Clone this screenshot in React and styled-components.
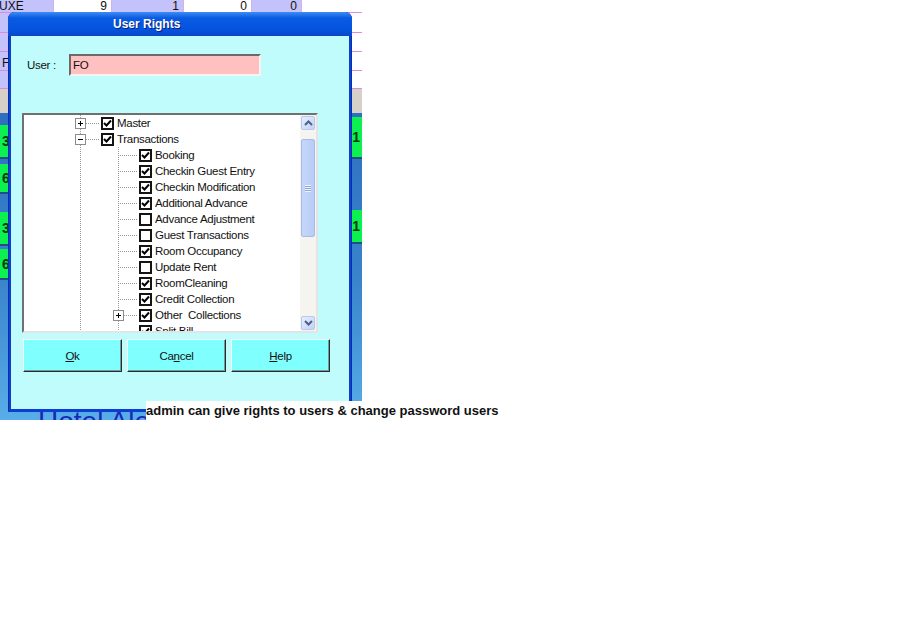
import React from 'react'
import styled, { createGlobalStyle } from 'styled-components'

const GlobalStyle = createGlobalStyle`
  html, body { margin: 0; padding: 0; background: #fff; }
  body { font-family: "Liberation Sans", Arial, sans-serif; }
`

const topCells = [
    { w: 55, tone: 'lav', text: 'UXE', align: 'left' },
    { w: 58, tone: 'white', text: '9' },
    { w: 72, tone: 'lav', text: '1' },
    { w: 68, tone: 'white', text: '0' },
    { w: 50, tone: 'lav', text: '0' },
]

const gridRows = [
    { h: 19, text: '' },
    { h: 18, text: '' },
    { h: 18, text: 'F' },
    { h: 17, text: '' },
]

const leftTiles = [
    { gap: 12, h: 32, text: '3' },
    { gap: 5, h: 28, text: '6' },
    { gap: 18, h: 32, text: '3' },
    { gap: 3, h: 29, text: '6' },
]

const rightTiles = [
    { gap: 4, h: 40, text: '1' },
    { gap: 51, h: 32, text: '1' },
]

const treeRows = [
    { level: 1, exp: '+', checked: true, label: 'Master' },
    { level: 1, exp: '-', checked: true, label: 'Transactions' },
    { level: 2, checked: true, label: 'Booking' },
    { level: 2, checked: true, label: 'Checkin Guest Entry' },
    { level: 2, checked: true, label: 'Checkin Modification' },
    { level: 2, checked: true, label: 'Additional Advance' },
    { level: 2, checked: false, label: 'Advance Adjustment' },
    { level: 2, checked: false, label: 'Guest Transactions' },
    { level: 2, checked: true, label: 'Room Occupancy' },
    { level: 2, checked: false, label: 'Update Rent' },
    { level: 2, checked: true, label: 'RoomCleaning' },
    { level: 2, checked: true, label: 'Credit Collection' },
    { level: 2, exp: '+', checked: true, label: 'Other  Collections' },
    { level: 2, checked: true, label: 'Split Bill' },
]

const Check = () => (
    <svg width="9" height="9" viewBox="0 0 9 9">
        <path d="M1 4 L3.5 6.5 L8 1.5" fill="none" stroke="#000" strokeWidth="2" />
    </svg>
)

const Chevron = ({ down }) => (
    <svg width="9" height="6" viewBox="0 0 9 6">
        <path d={down ? 'M1 1 L4.5 4.5 L8 1' : 'M1 5 L4.5 1.5 L8 5'} fill="none" stroke="#4d6185" strokeWidth="2" />
    </svg>
)

const App = () => {
    return (
        <Page>
            <GlobalStyle />
            <Scene>
                <BackApp>
                    <TopRow>
                        {topCells.map((c, i) => (
                            <TopCell key={i} $w={c.w} $tone={c.tone} $align={c.align}>{c.text}</TopCell>
                        ))}
                        <TopFill />
                    </TopRow>
                    {gridRows.map((r, i) => (
                        <GridRow key={i} $h={r.h}>
                            <GridLead>{r.text}</GridLead>
                        </GridRow>
                    ))}
                    <GrayBand />
                    <BluePanel>
                        <TileStrip>
                            {leftTiles.map((t, i) => (
                                <Tile key={i} $gap={t.gap} $h={t.h}>{t.text}</Tile>
                            ))}
                        </TileStrip>
                        <TileStrip $right>
                            {rightTiles.map((t, i) => (
                                <Tile key={i} $gap={t.gap} $h={t.h} $right>{t.text}</Tile>
                            ))}
                        </TileStrip>
                        <HotelName>Hotel Ale</HotelName>
                    </BluePanel>
                </BackApp>

                <Dialog>
                    <TitleBar>User Rights</TitleBar>
                    <DialogBody>
                        <UserRow>
                            <FieldLabel>User :</FieldLabel>
                            <UserInput>FO</UserInput>
                        </UserRow>
                        <TreeBox>
                            <TreeList>
                                {treeRows.map((r, i) => (
                                    <TreeRow key={i}>
                                        <Indent />
                                        {r.level === 2 && <Guide />}
                                        <Joint>
                                            {r.exp && <Expander $open={r.exp === '-'} />}
                                        </Joint>
                                        <CheckBox>{r.checked && <Check />}</CheckBox>
                                        <NodeLabel>{r.label}</NodeLabel>
                                    </TreeRow>
                                ))}
                            </TreeList>
                            <ScrollBar>
                                <ScrollButton><Chevron /></ScrollButton>
                                <Track>
                                    <Thumb><Grip /></Thumb>
                                </Track>
                                <ScrollButton><Chevron down /></ScrollButton>
                            </ScrollBar>
                        </TreeBox>
                        <ButtonRow>
                            <DlgButton><u>O</u>k</DlgButton>
                            <DlgButton>Ca<u>n</u>cel</DlgButton>
                            <DlgButton><u>H</u>elp</DlgButton>
                        </ButtonRow>
                    </DialogBody>
                </Dialog>
            </Scene>
            <Caption>admin can give rights to users &amp; change password users</Caption>
        </Page>
    )
}

export default App

const Page = styled.div`
    position: relative;
    width: 914px;
    height: 640px;
    background: #fff;
`
const Scene = styled.div`
    position: relative;
    width: 362px;
    height: 420px;
    overflow: hidden;
`
const BackApp = styled.div`
    display: flex;
    flex-direction: column;
    height: 100%;
    background: #fff;
`
const TopRow = styled.div`
    display: flex;
    height: 12px;
    border-bottom: 1px solid #e088e0;
    font-size: 12px;
    line-height: 12px;
`
const TopCell = styled.div`
    width: ${p => p.$w}px;
    box-sizing: border-box;
    background: ${p => (p.$tone === 'lav' ? '#c4c2fa' : '#fff')};
    border-right: 1px solid #d8b0e8;
    text-align: ${p => p.$align || 'right'};
    padding: 0 4px 0 0;
    margin-left: ${p => (p.$align === 'left' ? '-1px' : 0)};
    color: #111;
`
const TopFill = styled.div`
    flex: 1;
`
const GridRow = styled.div`
    display: flex;
    height: ${p => p.$h}px;
    border-bottom: 1px solid #e088e0;
`
const GridLead = styled.div`
    width: 55px;
    background: #c4c2fa;
    font-size: 12px;
    line-height: 18px;
    padding: 2px 0 0 2px;
    box-sizing: border-box;
    color: #111;
`
const GrayBand = styled.div`
    height: 24px;
    background: #d6d0c8;
`
const BluePanel = styled.div`
    position: relative;
    flex: 1;
    display: flex;
    justify-content: space-between;
    background: linear-gradient(#2e6fc0, #3a84cc 55%, #58aee8);
`
const TileStrip = styled.div`
    width: 40px;
    display: flex;
    flex-direction: column;
`
const Tile = styled.div`
    margin-top: ${p => p.$gap}px;
    height: ${p => p.$h}px;
    background: #0cf050;
    border-bottom: 2px solid #1f4f86;
    font-size: 14px;
    font-weight: bold;
    color: #0a3a10;
    display: flex;
    align-items: center;
    justify-content: ${p => (p.$right ? 'flex-end' : 'flex-start')};
    padding: 0 ${p => (p.$right ? '2px' : '0')} 0 ${p => (p.$right ? '0' : '2px')};
`
const HotelName = styled.div`
    position: absolute;
    left: 38px;
    bottom: -18px;
    font-size: 28px;
    line-height: 32px;
    color: #1a26b8;
    white-space: nowrap;
`
const Dialog = styled.div`
    position: absolute;
    left: 8px;
    top: 12px;
    width: 344px;
    height: 400px;
    box-sizing: border-box;
    display: flex;
    flex-direction: column;
    background: #0b3fd4;
    border-radius: 7px 7px 0 0;
    padding: 0 3px 3px;
    box-shadow: inset 1px 0 #0830a8, inset -1px 0 #0830a8;
    font-size: 11.5px;
    letter-spacing: -0.3px;
    color: #111;
`
const TitleBar = styled.div`
    height: 24px;
    line-height: 24px;
    padding-left: 105px;
    font-size: 12px;
    font-weight: bold;
    letter-spacing: 0;
    color: #fff;
    text-shadow: 1px 1px #0a2280;
    background: linear-gradient(#3e8cf4, #0a5be2 25%, #0453de 75%, #0a48c8);
    margin: 0 -3px;
    border-radius: 7px 7px 0 0;
`
const DialogBody = styled.div`
    flex: 1;
    display: flex;
    flex-direction: column;
    background: #c0fcfc;
`
const UserRow = styled.div`
    display: flex;
    align-items: center;
    margin-top: 18px;
    padding-left: 16px;
`
const FieldLabel = styled.div`
    width: 42px;
`
const UserInput = styled.div`
    width: 192px;
    height: 22px;
    box-sizing: border-box;
    background: #ffc0c0;
    border: 2px solid;
    border-color: #6a6a6a #f4f4f4 #f4f4f4 #6a6a6a;
    line-height: 18px;
    padding-left: 2px;
`
const TreeBox = styled.div`
    display: flex;
    margin: 37px 0 0 11px;
    width: 296px;
    height: 220px;
    box-sizing: border-box;
    background: #fff;
    border: 2px solid;
    border-color: #707070 #e4e4e4 #e4e4e4 #707070;
`
const TreeList = styled.div`
    flex: 1;
    overflow: hidden;
`
const TreeRow = styled.div`
    display: flex;
    align-items: center;
    height: 16px;
`
const Indent = styled.div`
    width: 38px;
    height: 16px;
    flex-shrink: 0;
`
const Guide = styled.div`
    width: 38px;
    height: 16px;
    flex-shrink: 0;
    background: linear-gradient(#9a9a9a 50%, transparent 50%) 18px 0 / 1px 2px repeat-y;
`
const Joint = styled.div`
    position: relative;
    width: 38px;
    height: 16px;
    flex-shrink: 0;
    background: linear-gradient(#9a9a9a 50%, transparent 50%) 18px 0 / 1px 2px repeat-y;
    &::after {
        content: '';
        position: absolute;
        left: 20px;
        top: 8px;
        width: 18px;
        height: 1px;
        background: repeating-linear-gradient(90deg, #9a9a9a 0 1px, transparent 1px 2px);
    }
`
const Expander = styled.div`
    position: absolute;
    left: 13px;
    top: 3px;
    width: 11px;
    height: 11px;
    box-sizing: border-box;
    border: 1px solid #8c8c8c;
    background: #fff;
    z-index: 1;
    &::before {
        content: '';
        position: absolute;
        left: 2px;
        top: 4px;
        width: 5px;
        height: 1px;
        background: #000;
    }
    &::after {
        content: '';
        position: absolute;
        left: 4px;
        top: 2px;
        width: 1px;
        height: 5px;
        background: #000;
        display: ${p => (p.$open ? 'none' : 'block')};
    }
`
const CheckBox = styled.div`
    width: 13px;
    height: 13px;
    margin-left: 1px;
    flex-shrink: 0;
    box-sizing: border-box;
    border: 2px solid #141414;
    background: #fff;
    display: flex;
    align-items: center;
    justify-content: center;
`
const NodeLabel = styled.div`
    margin-left: 3px;
    line-height: 16px;
    white-space: pre;
`
const ScrollBar = styled.div`
    width: 16px;
    display: flex;
    flex-direction: column;
    background: #f5f4ef;
    padding: 1px;
    box-sizing: border-box;
`
const ScrollButton = styled.div`
    height: 14px;
    box-sizing: border-box;
    border: 1px solid #b6c8f0;
    border-radius: 2px;
    background: linear-gradient(135deg, #e6eefe, #c2d3f8);
    display: flex;
    align-items: center;
    justify-content: center;
`
const Track = styled.div`
    flex: 1;
    padding-top: 9px;
`
const Thumb = styled.div`
    height: 98px;
    box-sizing: border-box;
    border: 1px solid #a4bbec;
    border-radius: 2px;
    background: linear-gradient(90deg, #c6d6fa, #b8cdf6);
    display: flex;
    align-items: center;
    justify-content: center;
`
const Grip = styled.div`
    width: 6px;
    height: 7px;
    background: repeating-linear-gradient(#eef3ff 0 1px, #8ea6dc 1px 2px);
`
const ButtonRow = styled.div`
    display: flex;
    gap: 5px;
    margin-top: 6px;
    padding-left: 12px;
`
const DlgButton = styled.div`
    width: 99px;
    height: 33px;
    box-sizing: border-box;
    background: #80ffff;
    border: 1px solid;
    border-color: #f4ffff #2a2a2a #2a2a2a #f4ffff;
    box-shadow: inset -1px -1px #6e9c9c;
    display: flex;
    align-items: center;
    justify-content: center;
`
const Caption = styled.div`
    position: absolute;
    left: 146px;
    top: 401px;
    right: 0;
    height: 19px;
    background: #fff;
    font-size: 13px;
    font-weight: bold;
    line-height: 20px;
    color: #111;
    white-space: nowrap;
`
